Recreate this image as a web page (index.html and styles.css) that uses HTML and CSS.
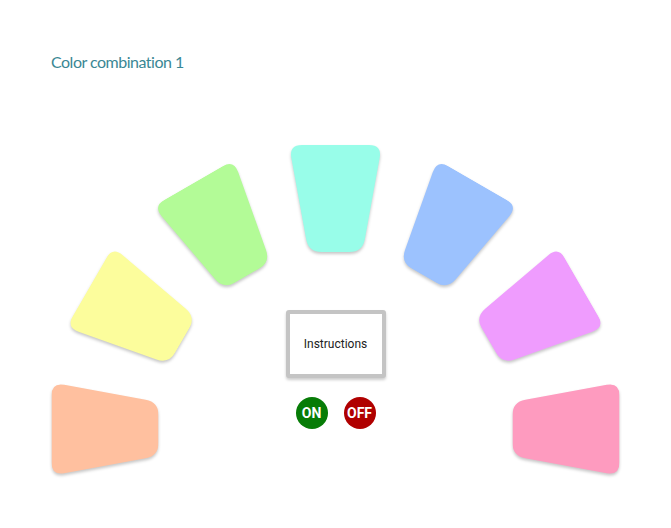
FILE: index.html
```html
<!DOCTYPE html>
<html>
<head>
<meta charset="utf-8">
<link rel="stylesheet" href="styles.css">
</head>
<body>
<header class="header">
  <h1 class="title">Color combination 1</h1>
</header>
<main class="stage">
  <div class="arc">
    <svg class="tile t1" viewBox="0 0 93 107" width="93" height="107"><path fill="#ffc09f" d="M13,0 L80,0 Q93,0 90.67,12.79 L75.83,94.21 Q73.5,107 60.5,107 L32.5,107 Q19.5,107 17.17,94.21 L2.33,12.79 Q0,0 13,0 Z"/></svg>
    <svg class="tile t2" viewBox="0 0 93 107" width="93" height="107"><path fill="#fcfd9c" d="M13,0 L80,0 Q93,0 90.67,12.79 L75.83,94.21 Q73.5,107 60.5,107 L32.5,107 Q19.5,107 17.17,94.21 L2.33,12.79 Q0,0 13,0 Z"/></svg>
    <svg class="tile t3" viewBox="0 0 93 107" width="93" height="107"><path fill="#b3fb97" d="M13,0 L80,0 Q93,0 90.67,12.79 L75.83,94.21 Q73.5,107 60.5,107 L32.5,107 Q19.5,107 17.17,94.21 L2.33,12.79 Q0,0 13,0 Z"/></svg>
    <svg class="tile t4" viewBox="0 0 93 107" width="93" height="107"><path fill="#98fde9" d="M13,0 L80,0 Q93,0 90.67,12.79 L75.83,94.21 Q73.5,107 60.5,107 L32.5,107 Q19.5,107 17.17,94.21 L2.33,12.79 Q0,0 13,0 Z"/></svg>
    <svg class="tile t5" viewBox="0 0 93 107" width="93" height="107"><path fill="#9cc2fe" d="M13,0 L80,0 Q93,0 90.67,12.79 L75.83,94.21 Q73.5,107 60.5,107 L32.5,107 Q19.5,107 17.17,94.21 L2.33,12.79 Q0,0 13,0 Z"/></svg>
    <svg class="tile t6" viewBox="0 0 93 107" width="93" height="107"><path fill="#ef9cfe" d="M13,0 L80,0 Q93,0 90.67,12.79 L75.83,94.21 Q73.5,107 60.5,107 L32.5,107 Q19.5,107 17.17,94.21 L2.33,12.79 Q0,0 13,0 Z"/></svg>
    <svg class="tile t7" viewBox="0 0 93 107" width="93" height="107"><path fill="#fe9bbf" d="M13,0 L80,0 Q93,0 90.67,12.79 L75.83,94.21 Q73.5,107 60.5,107 L32.5,107 Q19.5,107 17.17,94.21 L2.33,12.79 Q0,0 13,0 Z"/></svg>
  </div>
  <div class="controls">
    <div class="instructions">Instructions</div>
    <div class="buttons">
      <button class="btn on">ON</button>
      <button class="btn off">OFF</button>
    </div>
  </div>
</main>
</body>
</html>
```

FILE: styles.css
```css
* { box-sizing: border-box; }
html, body { margin: 0; padding: 0; background: #ffffff; }
body { width: 671px; height: 528px; overflow: hidden; font-family: Roboto, "Liberation Sans", sans-serif; }

.header { height: 90px; padding: 52px 0 0 51px; }
.title {
  margin: 0;
  font-family: Lato, "Noto Sans", sans-serif;
  font-weight: 400;
  font-size: 16px;
  letter-spacing: -0.5px;
  line-height: 20px;
  color: #3a8794;
}

.stage { position: relative; height: 438px; }

.arc { position: absolute; inset: 0; filter: drop-shadow(0 2px 1.5px rgba(0,0,0,0.22)); }
.tile {
  position: absolute;
  left: 288.5px;
  top: 55px;
  display: block;
  transform-origin: 46.5px 284px;
}
.t1 { transform: rotate(-90deg); }
.t2 { transform: rotate(-60deg); }
.t3 { transform: rotate(-30deg); }
.t4 { transform: rotate(0deg); }
.t5 { transform: rotate(30deg); }
.t6 { transform: rotate(60deg); }
.t7 { transform: rotate(90deg); }

.controls {
  position: relative;
  display: flex;
  flex-direction: column;
  align-items: center;
  padding-top: 220px;
}
.instructions {
  width: 100px;
  height: 68px;
  border: 4px solid #c4c4c4;
  border-radius: 3px;
  background: #fff;
  box-shadow: 0 2px 3px rgba(0,0,0,0.2);
  display: flex;
  align-items: center;
  justify-content: center;
  font-size: 12px;
  color: #222;
}
.buttons { display: flex; gap: 16px; margin-top: 19px; }
.btn {
  width: 32px;
  height: 32px;
  border: none;
  border-radius: 50%;
  padding: 0;
  color: #fff;
  font-family: Roboto, "Liberation Sans", sans-serif;
  font-weight: 700;
  font-size: 14px;
  display: flex;
  align-items: center;
  justify-content: center;
}
.on { background: #077c07; }
.off { background: #b00000; }
```
